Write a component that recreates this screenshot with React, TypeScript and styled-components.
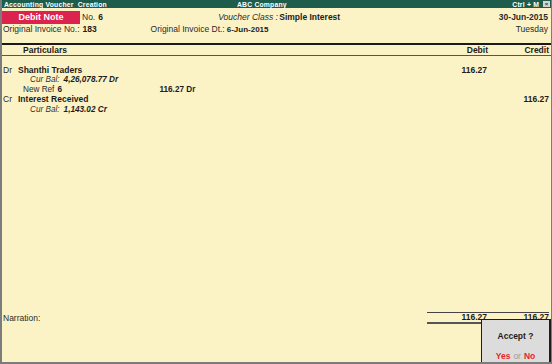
import React from "react";
import styled, { createGlobalStyle } from "styled-components";

const Global = createGlobalStyle`
  html, body { margin: 0; padding: 0; }
  body { font-family: "Liberation Sans", Arial, sans-serif; color: #1c1c1c; }
`;

const Frame = styled.div`
  position: relative;
  width: 552px;
  height: 364px;
  box-sizing: border-box;
  background: #fbf3c6;
  border-left: 2px solid #7c7c7c;
  border-right: 1px solid #7c7c7c;
  border-bottom: 2px solid #7c7c7c;
  display: flex;
  flex-direction: column;
  font-size: 8px;
  overflow: hidden;
`;

const TitleBar = styled.div`
  height: 8px;
  margin-left: -2px;
  margin-right: -1px;
  background: #1e5c4c;
  color: #ffffff;
  font-weight: bold;
  font-size: 6.8px;
  display: grid;
  grid-template-columns: 233px auto 1fr;
  align-items: center;
  padding: 0 2px 0 4px;
  letter-spacing: 0.2px;
`;

const TitleRight = styled.div`
  display: flex;
  justify-content: flex-end;
  align-items: center;
  gap: 4px;
`;

const CloseBox = styled.span`
  width: 7px;
  height: 6px;
  background: #d6d6d6;
  color: #333;
  font-size: 6px;
  line-height: 6px;
  text-align: center;
`;

const Header = styled.div`
  display: flex;
  flex-direction: column;
  padding: 2px 3px 0 0;
  height: 35px;
  box-sizing: border-box;
`;

const HeaderRow = styled.div<{ $h: number }>`
  display: flex;
  align-items: center;
  height: ${(p) => p.$h}px;
`;

const VoucherType = styled.div`
  width: 78px;
  height: 13px;
  background: #dc2350;
  color: #fff;
  font-weight: bold;
  font-size: 9px;
  display: flex;
  align-items: center;
  justify-content: center;
`;

const Label = styled.span<{ $italic?: boolean }>`
  display: inline-block;
  font-size: 8.5px;
  font-style: ${(p) => (p.$italic ? "italic" : "normal")};
  color: #2a2a2a;
`;

const Value = styled.span<{ $w?: number; $size?: number }>`
  display: inline-block;
  font-weight: bold;
  font-size: ${(p) => p.$size ?? 8.5}px;
  ${(p) => (p.$w ? `width: ${p.$w}px;` : "")}
`;

const Right = styled.div<{ $bold?: boolean }>`
  margin-left: auto;
  font-size: 8.5px;
  font-weight: ${(p) => (p.$bold ? "bold" : "normal")};
  color: #2a2a2a;
`;

const Grid = styled.div`
  display: grid;
  grid-template-columns: 1fr 61px 61px;
  padding-right: 2px;
  align-items: center;
`;

const ColHead = styled(Grid)`
  border-top: 2px solid #1a1a1a;
  border-bottom: 1px solid #555;
  height: 13px;
  box-sizing: border-box;
  font-weight: bold;
  font-size: 8.5px;
`;

const HeadCell = styled.div<{ $right?: boolean; $pad?: number }>`
  text-align: ${(p) => (p.$right ? "right" : "left")};
  padding-left: ${(p) => p.$pad ?? 0}px;
`;

const Body = styled.div`
  flex: 1;
  padding-top: 9px;
  display: flex;
  flex-direction: column;
`;

const Row = styled(Grid)`
  height: 9.8px;
  font-size: 8.5px;
`;

const Particular = styled.div<{ $indent: number }>`
  padding-left: ${(p) => p.$indent}px;
  display: flex;
  align-items: center;
  white-space: nowrap;
`;

const DrCr = styled.span`
  width: 15px;
  font-size: 8.5px;
  color: #2a2a2a;
`;

const Amount = styled.div`
  text-align: right;
  font-weight: bold;
  font-size: 8.5px;
`;

const Italic = styled.span<{ $bold?: boolean }>`
  font-style: italic;
  font-weight: ${(p) => (p.$bold ? "bold" : "normal")};
  margin-right: ${(p) => (p.$bold ? 0 : 4)}px;
  color: ${(p) => (p.$bold ? "#1c1c1c" : "#333")};
  font-size: 8.2px;
`;

const Footer = styled(Grid)`
  height: 12px;
  margin-bottom: 38px;
  font-size: 8.5px;
`;

const TotalCell = styled.div`
  text-align: right;
  font-weight: bold;
  height: 100%;
  display: flex;
  align-items: center;
  justify-content: flex-end;
  border-top: 1px solid #444;
  border-bottom: 2px solid #555;
  box-sizing: border-box;
  line-height: 9px;
`;

const Narration = styled.div`
  padding-left: 1px;
  font-size: 8.5px;
  color: #2a2a2a;
  align-self: center;
`;

const AcceptBox = styled.div`
  position: absolute;
  right: 0;
  bottom: 0;
  width: 70px;
  height: 43px;
  box-sizing: border-box;
  background: #dcdcdc;
  border: 1px solid #1e1e1e;
  border-right-width: 2px;
  border-bottom-width: 0;
  display: flex;
  flex-direction: column;
  align-items: center;
  font-weight: bold;
  font-size: 8.5px;
  padding-top: 11px;
`;

const Choices = styled.div`
  margin-top: auto;
  margin-bottom: 1px;
`;

const Red = styled.span`
  color: #e8242c;
  font-weight: bold;
`;

const Or = styled.span`
  color: #9a9a9a;
  font-weight: normal;
  margin: 0 3px;
`;

const entries = [
  { kind: "ledger", drcr: "Dr", name: "Shanthi Traders", debit: "116.27", credit: "" },
  { kind: "bal", label: "Cur Bal:", value: "4,26,078.77 Dr" },
  { kind: "ref", label: "New Ref", value: "6", amt: "116.27 Dr" },
  { kind: "ledger", drcr: "Cr", name: "Interest Received", debit: "", credit: "116.27" },
  { kind: "bal", label: "Cur Bal:", value: "1,143.02 Cr" },
];

export default function App() {
  return (
    <>
      <Global />
      <Frame>
        <TitleBar>
          <span>Accounting Voucher&nbsp; Creation</span>
          <span>ABC Company</span>
          <TitleRight>
            <span>Ctrl + M</span>
            <CloseBox>×</CloseBox>
          </TitleRight>
        </TitleBar>
        <Header>
          <HeaderRow $h={14}>
            <VoucherType>Debit Note</VoucherType>
            <Label style={{ marginLeft: 2, marginRight: 3 }}>No.</Label>
            <Value $w={120}>6</Value>
            <Label $italic style={{ width: 61 }}>Voucher Class :</Label>
            <Value>Simple Interest</Value>
            <Right $bold>30-Jun-2015</Right>
          </HeaderRow>
          <HeaderRow $h={10}>
            <Label style={{ marginLeft: 1, marginRight: 3 }}>Original Invoice No.:</Label>
            <Value $w={68}>183</Value>
            <Label style={{ marginRight: 2 }}>Original Invoice Dt.:</Label>
            <Value $size={8}>6-Jun-2015</Value>
            <Right>Tuesday</Right>
          </HeaderRow>
        </Header>
        <ColHead>
          <HeadCell $pad={21}>Particulars</HeadCell>
          <HeadCell $right>Debit</HeadCell>
          <HeadCell $right>Credit</HeadCell>
        </ColHead>
        <Body>
          {entries.map((e, i) => {
            if (e.kind === "ledger") {
              return (
                <Row key={i}>
                  <Particular $indent={1}>
                    <DrCr>{e.drcr}</DrCr>
                    <Value>{e.name}</Value>
                  </Particular>
                  <Amount style={{ paddingRight: 1 }}>{e.debit}</Amount>
                  <Amount>{e.credit}</Amount>
                </Row>
              );
            }
            if (e.kind === "bal") {
              return (
                <Row key={i}>
                  <Particular $indent={28}>
                    <Italic>{e.label}</Italic>
                    <Italic $bold>{e.value}</Italic>
                  </Particular>
                  <div />
                  <div />
                </Row>
              );
            }
            return (
              <Row key={i}>
                <Particular $indent={21}>
                  <Label style={{ marginRight: 3, fontSize: 8.2 }}>{e.label}</Label>
                  <Value $w={102} $size={8.2}>{e.value}</Value>
                  <Value $size={8.2}>{e.amt}</Value>
                </Particular>
                <div />
                <div />
              </Row>
            );
          })}
        </Body>
        <Footer>
          <Narration>Narration:</Narration>
          <TotalCell style={{ paddingRight: 1 }}>116.27</TotalCell>
          <TotalCell>116.27</TotalCell>
        </Footer>
        <AcceptBox>
          <span>Accept ?</span>
          <Choices>
            <Red>Yes</Red>
            <Or>or</Or>
            <Red>No</Red>
          </Choices>
        </AcceptBox>
      </Frame>
    </>
  );
}
